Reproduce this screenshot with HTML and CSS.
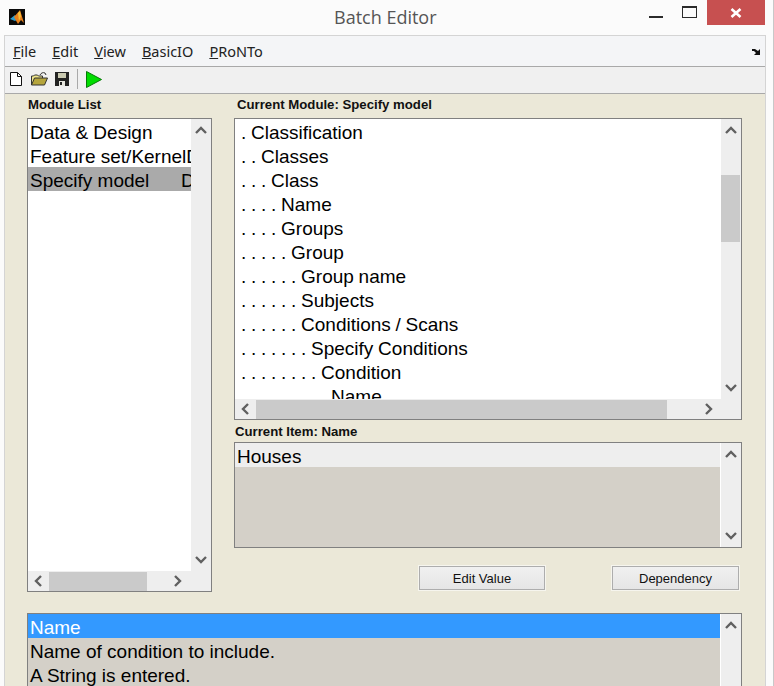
FILE: index.html
```html
<!DOCTYPE html>
<html>
    <head>
        <meta charset="utf-8">
        <title>Batch Editor</title>
        <link rel="stylesheet" href="styles.css">
    </head>

    <body>
        <svg class="defs" width="0" height="0">
            <symbol id="up" viewBox="0 0 14 10"><path d="M2 8 7 3l5 5" fill="none" stroke="#606060" stroke-width="2.4"/></symbol>
            <symbol id="down" viewBox="0 0 14 10"><path d="M2 2l5 5 5-5" fill="none" stroke="#606060" stroke-width="2.4"/></symbol>
            <symbol id="left" viewBox="0 0 10 14"><path d="M8 2 3 7l5 5" fill="none" stroke="#606060" stroke-width="2.4"/></symbol>
            <symbol id="right" viewBox="0 0 10 14"><path d="M2 2l5 5-5 5" fill="none" stroke="#606060" stroke-width="2.4"/></symbol>
        </svg>

        <div class="page">
            <div class="titlebar">
                <svg class="logo" width="16" height="16" viewBox="0 0 16 16">
                    <rect width="16" height="16" fill="#0a0a0a"/>
                    <path d="M1 10 6 6l3 4-3 2z" fill="#2f9fd0"/>
                    <path d="M5 8l6-7 4 13-3-3-3 4z" fill="#e8801c"/>
                    <path d="M9 4l2-2 1 5-2 5z" fill="#f6c23c"/>
                </svg>
                <div class="title">Batch Editor</div>
                <div class="winbtn min"><span></span></div>
                <div class="winbtn max"><span></span></div>
                <div class="winbtn close">
                    <svg width="12" height="10" viewBox="0 0 12 10"><path d="M1.5 1l9 8M10.500 1l-9 8" stroke="#fff" stroke-width="2.600"/></svg>
                </div>
            </div>

            <div class="app">
                <div class="menubar">
                    <span><u>F</u>ile</span>
                    <span><u>E</u>dit</span>
                    <span><u>V</u>iew</span>
                    <span><u>B</u>asicIO</span>
                    <span><u>P</u>RoNTo</span>
                    <svg class="dock" width="8" height="7" viewBox="0 0 8 7"><path d="M0 1h3l3 2 2-2v6H2l2-2-2-2H0z" fill="#111"/></svg>
                </div>

                <div class="toolbar">
                    <svg class="tool-new" width="12" height="14" viewBox="0 0 12 14"><path d="M.5.500h7l4 4v9H.500z" fill="#fff" stroke="#111"/><path d="M7.500.500v4h4" fill="none" stroke="#111"/></svg>
                    <svg class="tool-open" width="17" height="14" viewBox="0 0 17 14"><path d="M.5 13V4h2l1-1h3l1 1h4v2" fill="#f0e68c" stroke="#333"/><path d="M.5 13l3-7h13l-3 7z" fill="#b5a53c" stroke="#333"/><path d="M9 3c1-2 3-3 5-2l1 2" fill="none" stroke="#333"/></svg>
                    <svg class="tool-save" width="14" height="14" viewBox="0 0 14 14"><path d="M0 0h14v14H0z" fill="#222"/><path d="M3 1h8v5H3z" fill="#c9c9b0"/><path d="M4 9h6v5H4z" fill="#e8e8e0"/><path d="M5 10h2v3H5z" fill="#222"/></svg>
                    <span class="tool-sep"></span>
                    <svg class="tool-run" width="16" height="17" viewBox="0 0 16 17"><path d="M.5.500 15.500 8.500.5 16.500z" fill="#00dc00" stroke="#067a06"/></svg>
                </div>

                <div class="content">
                    <div class="columns">
                        <div class="col">
                            <div class="label left-label">Module List</div>
                            <div class="box module-box">
                                <div class="rows">
                                    <div class="row">Data &amp; Design</div>
                                    <div class="row">Feature set/KernelDependency</div>
                                    <div class="row picked">Specify model      Dependency</div>
                                </div>
                                <div class="vscroll">
                                    <svg class="arrow" width="14" height="10"><use href="#up"/></svg>
                                    <div class="vtrack"></div>
                                    <svg class="arrow" width="14" height="10"><use href="#down"/></svg>
                                </div>
                                <div class="hscroll">
                                    <svg class="arrow-h" width="10" height="14"><use href="#left"/></svg>
                                    <div class="htrack"><div class="hthumb module-thumb"></div></div>
                                    <svg class="arrow-h" width="10" height="14"><use href="#right"/></svg>
                                </div>
                            </div>
                        </div>

                        <div class="col">
                            <div class="label module-label">Current Module: Specify model</div>
                            <div class="box tree-box">
                                <div class="rows tree">
                                    <div class="row">. Classification</div>
                                    <div class="row">. . Classes</div>
                                    <div class="row">. . . Class</div>
                                    <div class="row">. . . . Name</div>
                                    <div class="row">. . . . Groups</div>
                                    <div class="row">. . . . . Group</div>
                                    <div class="row">. . . . . . Group name</div>
                                    <div class="row">. . . . . . Subjects</div>
                                    <div class="row">. . . . . . Conditions / Scans</div>
                                    <div class="row">. . . . . . . Specify Conditions</div>
                                    <div class="row">. . . . . . . . Condition</div>
                                    <div class="row">. . . . . . . . . Name</div>
                                </div>
                                <div class="vscroll">
                                    <svg class="arrow" width="14" height="10"><use href="#up"/></svg>
                                    <div class="vtrack"><div class="vthumb"></div></div>
                                    <svg class="arrow" width="14" height="10"><use href="#down"/></svg>
                                </div>
                                <div class="hscroll">
                                    <svg class="arrow-h" width="10" height="14"><use href="#left"/></svg>
                                    <div class="htrack"><div class="hthumb tree-thumb"></div></div>
                                    <svg class="arrow-h" width="10" height="14"><use href="#right"/></svg>
                                </div>
                            </div>

                            <div class="label item-label">Current Item: Name</div>
                            <div class="box item-box">
                                <div class="rows grey">
                                    <div class="row light">Houses</div>
                                </div>
                                <div class="vscroll edged">
                                    <svg class="arrow" width="14" height="10"><use href="#up"/></svg>
                                    <div class="vtrack"></div>
                                    <svg class="arrow" width="14" height="10"><use href="#down"/></svg>
                                </div>
                            </div>

                            <div class="buttons">
                                <button class="edit-btn">Edit Value</button>
                                <button class="dep-btn">Dependency</button>
                            </div>
                        </div>
                    </div>

                    <div class="box help-box">
                        <div class="rows grey">
                            <div class="row active">Name</div>
                            <div class="row">Name of condition to include.</div>
                            <div class="row">A String is entered.</div>
                        </div>
                        <div class="vscroll edged">
                            <svg class="arrow" width="14" height="10"><use href="#up"/></svg>
                        </div>
                    </div>
                </div>
            </div>
        </div>
    </body>
</html>
```

FILE: styles.css
```css
html, body {
    margin: 0;
    height: 686px;
    overflow: hidden;
    background: #fbfbfb;
}

body {
    font-family: "Liberation Sans", sans-serif;
    color: #000;
}

.defs {position: absolute}

.page {
    box-sizing: border-box;
    width: 774px;
    height: 686px;
    padding-right: 7px;
    border-right: 1px solid #c8c8c8;
}

/* title bar */
.titlebar {
    display: flex;
    height: 35px;
}

.logo {margin: 9px 0 0 9px}

.title {
    font: 18px "Open Sans", sans-serif;
    color: #555;
    margin: 5px 0 0 309px;
    width: 315px;
}

.winbtn {width: 32px}

.min span {
    display: block;
    width: 14px;
    height: 2px;
    background: #2b2b2b;
    margin: 16px 0 0 0;
}

.max {margin-left: 1px}

.max span {
    display: block;
    box-sizing: border-box;
    width: 15px;
    height: 12px;
    margin-top: 6px;
    border: 1px solid #2b2b2b;
    border-top-width: 2px;
}

.close {
    width: 58px;
    height: 25px;
    margin-left: -7px;
    background: #c75050;
    display: flex;
    align-items: center;
    justify-content: center;
}

.app {
    margin-left: 4px;
    height: 651px;
    border: 1px solid #d4d4d4;
    border-width: 1px 1px 0;
    display: flex;
    flex-direction: column;
}

/* menu and toolbar */
.menubar {
    height: 30px;
    flex: none;
    background: #f4f5f7;
    border-bottom: 1px solid #a9a9a9;
    display: flex;
    align-items: center;
    gap: 16px;
    padding-left: 8px;
    font: 14.500px "Noto Sans", sans-serif;
    color: #222;
}

.dock {margin: 0 5px 0 auto}

.toolbar {
    box-sizing: border-box;
    height: 27px;
    flex: none;
    background: #f0f0f0;
    border-bottom: 1px solid #a9a9a9;
    display: flex;
    align-items: center;
    padding: 0 0 2px 5px;
}

.tool-open {margin-left: 9px}
.tool-save {margin-left: 7px}

.tool-sep {
    width: 1px;
    height: 20px;
    background: #a9a9a9;
    margin-left: 8px;
}

.tool-run {margin-left: 8px}

/* panels */
.content {
    flex: 1;
    min-height: 0;
    overflow: hidden;
    background: #ebe8d8;
    padding-left: 22px;
}

.columns {
    display: grid;
    grid-template-columns: 185px 508px;
    column-gap: 22px;
}

.label {
    font-size: 13.200px;
    font-weight: bold;
    color: #111;
}

.left-label {padding: 3px 0 0 1px; height: 21px}
.module-label {padding: 3px 0 0 3px; height: 21px}
.item-label {padding: 4px 0 0 1px; height: 18px}

.box {
    box-sizing: border-box;
    border: 1px solid #808080;
    background: #fff;
    display: grid;
    grid-template-columns: 1fr 20px;
    grid-template-rows: 1fr 20px;
    font-size: 19px;
    overflow: hidden;
}

.module-box {height: 474px}
.tree-box {height: 302px}

.item-box {
    height: 106px;
    grid-template-rows: 1fr;
}

.rows {
    overflow: hidden;
    min-width: 0;
    min-height: 0;
}

.row {
    height: 24px;
    line-height: 28px;
    padding-left: 2px;
    white-space: pre;
    overflow: hidden;
}

.tree .row {
    padding-left: 6px;
    word-spacing: -.55px;
}

.picked {background: #aaa}
.grey {background: #d4d0c8}
.light {background: #eee}

.active {
    background: #39f;
    color: #fff;
}

/* scrollbars */
.vscroll {
    background: #eee;
    display: flex;
    flex-direction: column;
    align-items: center;
    padding: 6px 0;
    box-sizing: border-box;
    min-height: 0;
}

.edged {
    border-left: 1px solid #fff;
    margin-left: -1px;
}

.vtrack {
    flex: 1;
    align-self: stretch;
    padding-top: 40px;
    min-height: 0;
}

.vthumb {
    width: 19px;
    height: 67px;
    background: #cacaca;
}

.arrow {flex: none}

.hscroll {
    grid-column: 1 / 3;
    background: #eee;
    display: flex;
    align-items: center;
    padding-left: 5px;
}

.htrack {
    height: 19px;
    flex: none;
    margin-left: 6px;
}

.hthumb {
    height: 19px;
    background: #cacaca;
}

.module-box .htrack {width: 98px}
.tree-box .htrack {width: 411px}
.module-box .arrow-h:last-child {margin-left: 26px}
.tree-box .arrow-h:last-child {margin-left: 37px}

/* buttons */
.buttons {
    display: flex;
    margin-top: 18px;
    height: 24px;
    padding-left: 185px;
}

button {
    font: 13px "Liberation Sans", sans-serif;
    color: #111;
    height: 24px;
    padding: 0;
    border: 1px solid #adadad;
    background: linear-gradient(#f0f0f0, #e5e5e5);
    box-shadow: 0 0 0 1px #f6f5ee;
    border-radius: 0;
}

.edit-btn {width: 126px}

.dep-btn {
    width: 127px;
    margin-left: 67px;
}

.help-box {
    width: 715px;
    height: 120px;
    margin-top: 21px;
    grid-template-rows: 1fr;
}
```
